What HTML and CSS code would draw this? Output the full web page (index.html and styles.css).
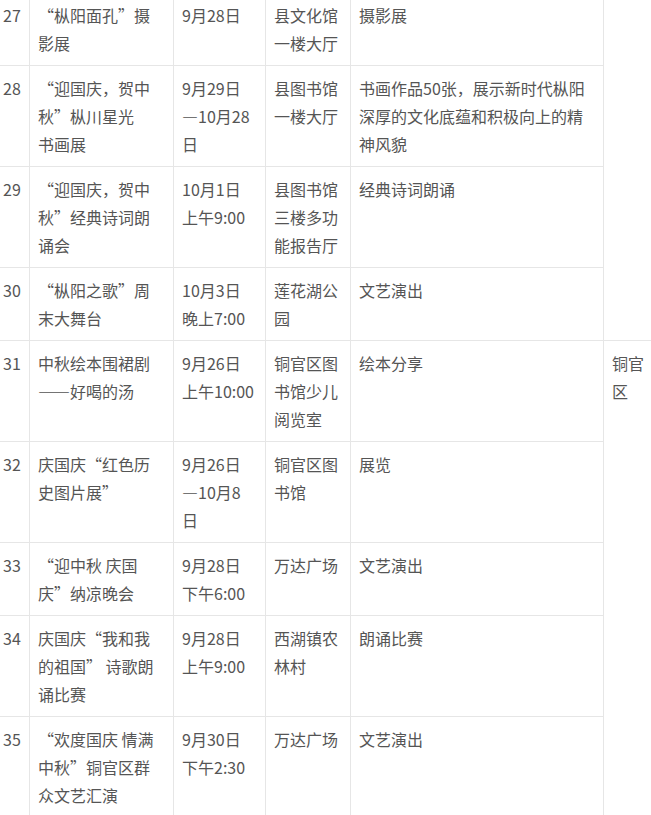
FILE: index.html
```html
<!DOCTYPE html>
<html lang="zh-CN">
<head>
<meta charset="utf-8">
<title>活动安排</title>
<link rel="stylesheet" href="styles.css">
</head>
<body>
<table class="events">
  <colgroup>
    <col class="c-no">
    <col class="c-name">
    <col class="c-date">
    <col class="c-place">
    <col class="c-desc">
    <col class="c-area">
  </colgroup>
  <tbody>
    <tr>
      <td class="no">27</td>
      <td>“枞阳面孔”摄影展</td>
      <td>9月28日</td>
      <td>县文化馆一楼大厅</td>
      <td>摄影展</td>
      <td rowspan="4"></td>
    </tr>
    <tr>
      <td class="no">28</td>
      <td>“迎国庆，贺中秋”枞川星光<br>书画展</td>
      <td>9月29日<br>—10月28日</td>
      <td>县图书馆一楼大厅</td>
      <td>书画作品50张，展示新时代枞阳深厚的文化底蕴和积极向上的精神风貌</td>
    </tr>
    <tr>
      <td class="no">29</td>
      <td>“迎国庆，贺中秋”经典诗词朗诵会</td>
      <td>10月1日<br>上午9:00</td>
      <td>县图书馆三楼多功能报告厅</td>
      <td>经典诗词朗诵</td>
    </tr>
    <tr>
      <td class="no">30</td>
      <td>“枞阳之歌”周末大舞台</td>
      <td>10月3日<br>晚上7:00</td>
      <td>莲花湖公园</td>
      <td>文艺演出</td>
    </tr>
    <tr>
      <td class="no">31</td>
      <td>中秋绘本围裙剧——好喝的汤</td>
      <td>9月26日<br>上午10:00</td>
      <td>铜官区图书馆少儿阅览室</td>
      <td>绘本分享</td>
      <td rowspan="5">铜官区</td>
    </tr>
    <tr>
      <td class="no">32</td>
      <td>庆国庆“红色历史图片展”</td>
      <td>9月26日<br>—10月8日</td>
      <td>铜官区图书馆</td>
      <td>展览</td>
    </tr>
    <tr>
      <td class="no">33</td>
      <td>“迎中秋 庆国<br>庆”纳凉晚会</td>
      <td>9月28日<br>下午6:00</td>
      <td>万达广场</td>
      <td>文艺演出</td>
    </tr>
    <tr>
      <td class="no">34</td>
      <td>庆国庆“我和我的祖国” 诗歌朗诵比赛</td>
      <td>9月28日<br>上午9:00</td>
      <td>西湖镇农林村</td>
      <td>朗诵比赛</td>
    </tr>
    <tr>
      <td class="no">35</td>
      <td>“欢度国庆 情满中秋”铜官区群众文艺汇演</td>
      <td>9月30日<br>下午2:30</td>
      <td>万达广场</td>
      <td>文艺演出</td>
    </tr>
  </tbody>
</table>
</body>
</html>
```

FILE: styles.css
```css
html, body {
  margin: 0;
  padding: 0;
  background: #ffffff;
  overflow: hidden;
}

body {
  font-family: "Noto Sans CJK SC", "Noto Sans", sans-serif;
  font-size: 16px;
  line-height: 28px;
  color: #555555;
}

.events {
  border-collapse: collapse;
  table-layout: fixed;
  width: 667px;
  margin: -8px 0 0 -6px;
}

.events td {
  border: 1px solid #e6e6e6;
  padding: 8px 9px 8px 8px;
  vertical-align: top;
  word-break: break-all;
}

.events td.no {
  padding-right: 6px;
  white-space: nowrap;
  word-break: normal;
}

.c-no { width: 35px; }
.c-name { width: 144px; }
.c-date { width: 92px; }
.c-place { width: 85px; }
.c-desc { width: 253px; }
.c-area { width: 58px; }
```
